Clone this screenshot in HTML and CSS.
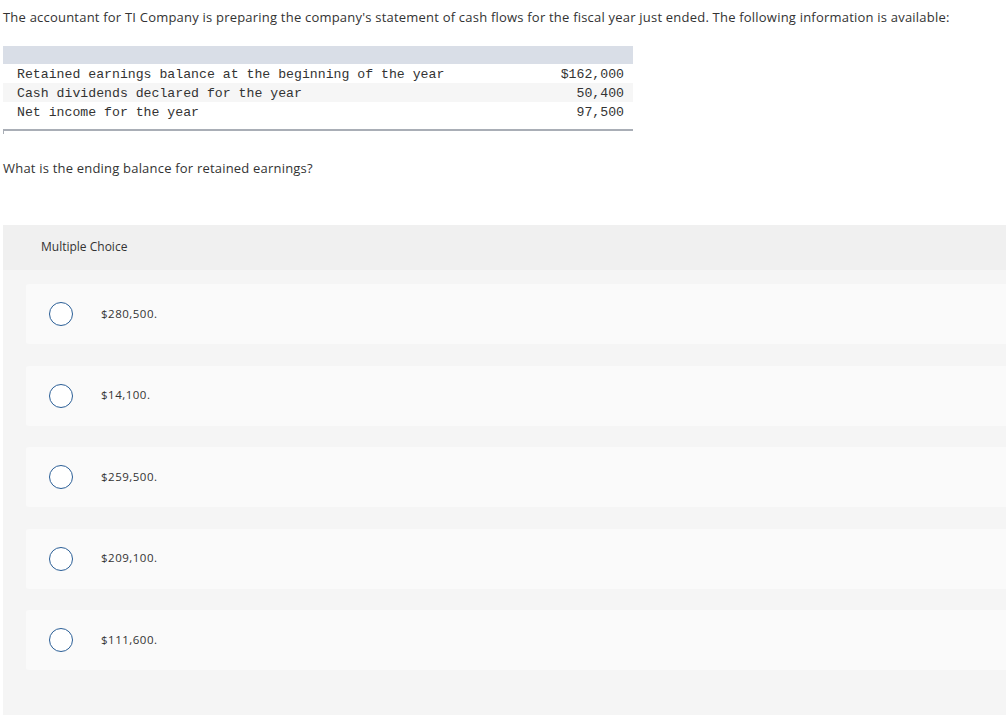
FILE: index.html
```html
<!DOCTYPE html>
<html>
<head>
<meta charset="utf-8">
<link rel="stylesheet" href="styles.css">
</head>
<body>
<p class="intro">The accountant for TI Company is preparing the company's statement of cash flows for the fiscal year just ended. The following information is available:</p>
<div class="data">
  <div class="data-head"></div>
  <div class="data-row"><span>Retained earnings balance at the beginning of the year</span><span>$162,000</span></div>
  <div class="data-row alt"><span>Cash dividends declared for the year</span><span>50,400</span></div>
  <div class="data-row"><span>Net income for the year</span><span>97,500</span></div>
  <div class="data-foot"></div>
</div>
<p class="question">What is the ending balance for retained earnings?</p>
<div class="mc">
  <div class="mc-head">Multiple Choice</div>
  <div class="mc-body">
    <div class="option"><span class="radio"></span><span class="label">$280,500.</span></div>
    <div class="option"><span class="radio"></span><span class="label">$14,100.</span></div>
    <div class="option"><span class="radio"></span><span class="label">$259,500.</span></div>
    <div class="option"><span class="radio"></span><span class="label">$209,100.</span></div>
    <div class="option"><span class="radio"></span><span class="label">$111,600.</span></div>
  </div>
</div>
</body>
</html>
```
FILE: styles.css
```css
html, body {
  margin: 0;
  padding: 0;
  background: #ffffff;
}
body {
  font-family: "Open Sans", Lato, "Liberation Sans", sans-serif;
  color: #333333;
}
.intro {
  margin: 0;
  padding: 7px 3px 0;
  font-size: 13px;
  line-height: 20px;
  letter-spacing: 0.21px;
}
.data {
  margin: 19px 0 0 3px;
  width: 630px;
  font-family: "Liberation Mono", "DejaVu Sans Mono", monospace;
  font-size: 13.2px;
  color: #333333;
}
.data-head {
  height: 18px;
  background: #d9dee7;
}
.data-row {
  display: flex;
  justify-content: space-between;
  height: 19px;
  line-height: 21px;
  padding: 0 9px 0 14px;
}
.data-row.alt {
  background: #f6f6f6;
}
.data-foot {
  margin-top: 8px;
  height: 2px;
  background: #a9aeb6;
  position: relative;
}
.data-foot::before {
  content: "";
  position: absolute;
  left: 0;
  top: 0;
  width: 1px;
  height: 5px;
  background: #a9aeb6;
}
.question {
  margin: 27px 0 0;
  padding: 0 3px;
  font-size: 13px;
  line-height: 20px;
  letter-spacing: 0.2px;
}
.mc {
  margin: 47px 0 0 3px;
  background: #f5f5f5;
  padding-bottom: 50px;
}
.mc-head {
  height: 45px;
  line-height: 44px;
  background: #f0f0f0;
  padding-left: 38px;
  font-size: 12px;
  color: #333333;
}
.mc-body {
  display: flex;
  flex-direction: column;
  gap: 21.5px;
  padding: 14px 0 0 23px;
}
.option {
  height: 60px;
  background: #fafafa;
  border-radius: 3px 0 0 3px;
  display: flex;
  align-items: center;
  padding-left: 23px;
}
.radio {
  width: 22px;
  height: 22px;
  border: 1.4px solid #2a5e96;
  border-radius: 50%;
  background: #ffffff;
  flex: none;
}
.label {
  margin-left: 28px;
  font-size: 11.5px;
  line-height: 14px;
  letter-spacing: 0.5px;
  color: #333333;
  padding-bottom: 1px;
}
```
